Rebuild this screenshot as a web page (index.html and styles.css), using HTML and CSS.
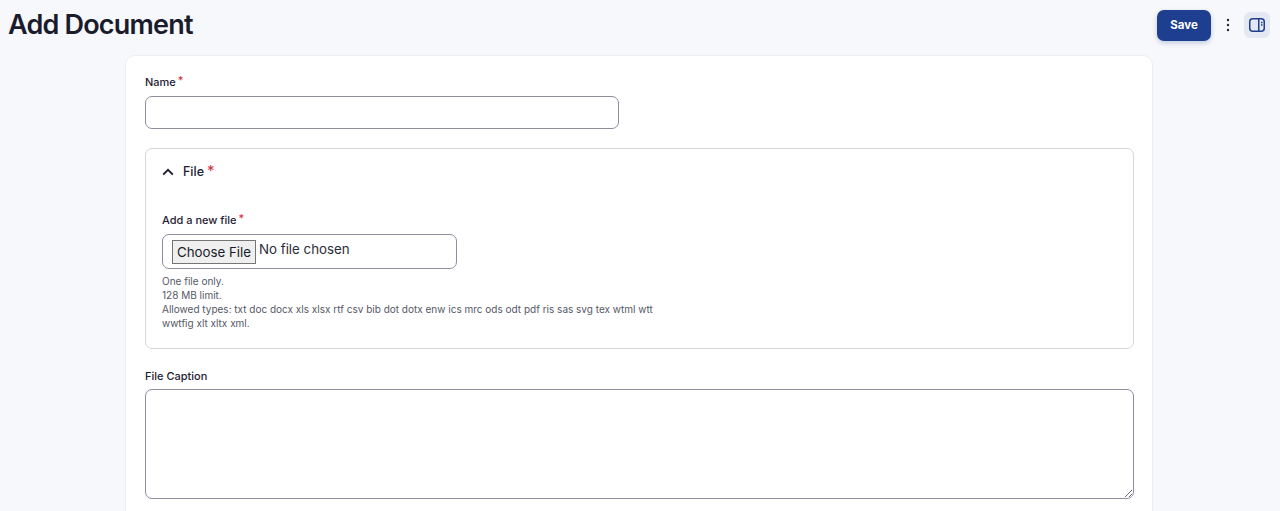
FILE: index.html
```html
<!DOCTYPE html>
<html lang="en">
<head>
<meta charset="utf-8">
<title>Add Document</title>
<link rel="stylesheet" href="styles.css">
</head>
<body>
<header class="topbar">
  <h1 class="title">Add Document</h1>
  <div class="actions">
    <button class="save" type="button">Save</button>
    <button class="kebab" type="button" aria-label="More actions">
      <svg width="4" height="14" viewBox="0 0 4 14"><circle cx="2" cy="2" r="1.2"/><circle cx="2" cy="7" r="1.2"/><circle cx="2" cy="12" r="1.2"/></svg>
    </button>
    <button class="panel" type="button" aria-label="Toggle sidebar">
      <svg width="16" height="14" viewBox="0 0 16 14" fill="none"><rect x="0.75" y="0.75" width="14.5" height="12.5" rx="3" stroke="#1e3f8f" stroke-width="1.5"/><path d="M9.75 1v12" stroke="#1e3f8f" stroke-width="1.5"/><path d="M12 4.5h1.5M12 7h1.5" stroke="#1e3f8f" stroke-width="1.5"/></svg>
    </button>
  </div>
</header>
<main class="card">
  <div class="field name-field">
    <label class="label">Name<span class="req">*</span></label>
    <input class="input name-input" type="text">
  </div>
  <section class="file-box">
    <div class="file-head">
      <svg class="chev" width="12" height="8" viewBox="0 0 12 8" fill="none"><path d="M1.2 6.6 6 1.8l4.8 4.8" stroke="#1a1c2c" stroke-width="1.8"/></svg>
      <span class="file-title">File</span><span class="req req-big">*</span>
    </div>
    <label class="label">Add a new file<span class="req">*</span></label>
    <div class="file-input">
      <span class="choose">Choose File</span><span class="nofile">No file chosen</span>
    </div>
    <div class="help">
      <div>One file only.</div>
      <div>128 MB limit.</div>
      <div>Allowed types: txt doc docx xls xlsx rtf csv bib dot dotx enw ics mrc ods odt pdf ris sas svg tex wtml wtt<br>wwtfig xlt xltx xml.</div>
    </div>
  </section>
  <div class="field caption-field">
    <label class="label">File Caption</label>
    <textarea class="input caption"></textarea>
  </div>
</main>
</body>
</html>
```
FILE: styles.css
```css
* { box-sizing: border-box; }
html, body { margin: 0; height: 511px; overflow: hidden; }
body { background: #f7f8fb; font-family: Inter, "Liberation Sans", sans-serif; color: #1a1c2c; }
.topbar { display: flex; justify-content: space-between; align-items: center; height: 55px; padding: 0 10px 5px 8px; }
.title { margin: 0; font-size: 27px; font-weight: 600; letter-spacing: -0.8px; line-height: 50px; color: #1a1c2c; }
.actions { display: flex; align-items: center; }
.save { width: 54px; height: 31px; border: 0; border-radius: 7px; background: #1e3f8f; color: #fff; font: 700 11.5px Inter, sans-serif; box-shadow: 0 2px 5px rgba(30,63,143,.25); padding: 0; }
.kebab { width: 33px; height: 25px; padding: 0; border: 0; background: none; display: flex; align-items: center; justify-content: center; }
.kebab svg { fill: #23253a; }
.panel { width: 26px; height: 26px; padding: 0; border: 0; border-radius: 6px; background: #e4e8f2; display: flex; align-items: center; justify-content: center; }
.card { width: 1028px; margin-left: 125px; height: 470px; background: #fff; border: 1px solid #eceef1; border-radius: 10px 10px 0 0; padding: 18px 19px 0; }
.label { display: block; font-size: 11px; font-weight: 500; line-height: 16px; color: #1f2233; }
.req { color: #d62f3c; font-size: 11px; margin-left: 2px; position: relative; top: -2px; }
.input { display: block; border: 1px solid #8e8f9e; border-radius: 7px; background: #fff; }
.name-field .label { margin-bottom: 6px; }
.name-input { width: 474px; height: 33px; }
.file-box { margin-top: 19px; width: 989px; height: 201px; border: 1px solid #d5d7dc; border-radius: 7px; padding: 0 16px; }
.file-head { display: flex; align-items: center; height: 45px; margin-bottom: 18px; }
.chev { margin-right: 9px; }
.file-title { font-size: 12.5px; font-weight: 500; color: #1f2233; }
.req-big { font-size: 15px; margin-left: 3px; top: -1px; }
.file-input { display: flex; align-items: flex-start; width: 295px; height: 35px; margin-top: 6px; border: 1px solid #8e8f9e; border-radius: 7px; padding: 5px 9px; font-size: 13.3px; }
.choose { display: block; width: 84px; height: 24px; border: 1px solid #767676; background: #efefef; border-radius: 0; font-size: 13.3px; line-height: 22px; text-align: center; color: #1a1c2c; }
.nofile { margin-left: 3px; line-height: 19px; color: #2b2d3a; }
.help { margin-top: 5px; width: 520px; font-size: 10px; line-height: 14px; color: #555866; }
.caption-field { margin-top: 19px; }
.caption-field .label { margin-bottom: 5px; }
.caption { width: 989px; height: 110px; resize: both; }
```
